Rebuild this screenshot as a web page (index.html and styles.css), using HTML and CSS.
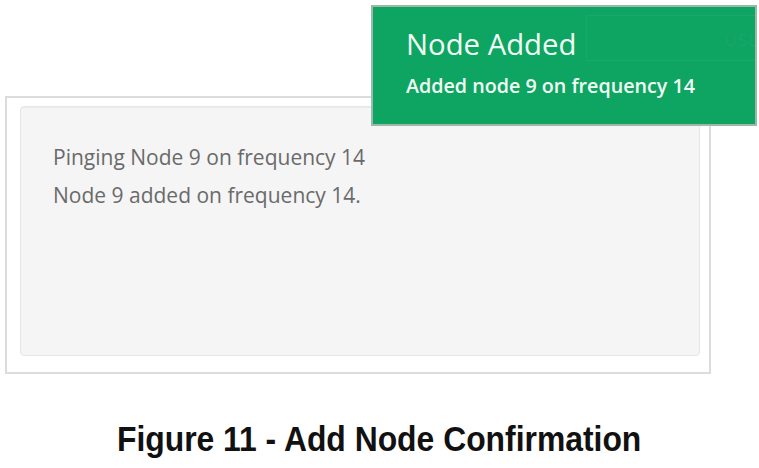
FILE: index.html
```html
<!DOCTYPE html>
<html>
<head>
<meta charset="utf-8">
<link rel="stylesheet" href="styles.css">
</head>
<body>
<div class="stage">
  <div class="panel">
    <div class="well">
      <p class="line">Pinging Node 9 on frequency 14</p>
      <p class="line">Node 9 added on frequency 14.</p>
    </div>
  </div>
  <div class="toast">
    <div class="ghost"><span class="ghost-text">USL</span></div>
    <div class="toast-title">Node Added</div>
    <div class="toast-msg">Added node 9 on frequency 14</div>
  </div>
  <div class="caption"><span class="caption-text">Figure 11 - Add Node Confirmation</span></div>
</div>
</body>
</html>
```
FILE: styles.css
```css
html, body {
  margin: 0;
  padding: 0;
  background: #ffffff;
}
.stage {
  position: relative;
  width: 759px;
  height: 468px;
  overflow: hidden;
  padding-top: 96px;
  box-sizing: border-box;
}
.panel {
  margin-left: 5px;
  width: 706px;
  height: 278px;
  box-sizing: border-box;
  border: 2px solid #dcdcdc;
  background: #ffffff;
  padding: 8px 9px 0 13px;
}
.well {
  height: 250px;
  box-sizing: border-box;
  background: #f5f5f5;
  border: 1px solid #e6e6e6;
  border-radius: 4px;
  box-shadow: inset 0 1px 1px rgba(0,0,0,0.04);
  padding: 36px 0 0 32px;
}
.line {
  margin: 0 0 10px 0;
  font-family: "Open Sans", sans-serif;
  font-size: 21px;
  line-height: 28px;
  color: #6a6a6a;
}
.toast {
  position: absolute;
  left: 371px;
  top: 5px;
  width: 386px;
  height: 121px;
  box-sizing: border-box;
  border: 2px solid #9bb8a8;
  background: #0ea462;
  padding: 20px 0 0 33px;
  font-family: "Open Sans", sans-serif;
  color: #f2fff5;
}
.ghost {
  position: absolute;
  left: 213px;
  top: 8px;
  width: 175px;
  height: 44px;
  border: 1px solid rgba(255,255,255,0.05);
  border-right: none;
}
.ghost-text {
  position: absolute;
  right: 4px;
  top: 12px;
  font-size: 17px;
  color: rgba(255,255,255,0.06);
  letter-spacing: 1px;
}
.toast-title {
  font-size: 29.3px;
  line-height: 34px;
  font-weight: 400;
}
.toast-msg {
  margin-top: 13px;
  font-size: 19.7px;
  line-height: 24px;
  font-weight: 600;
}
.caption {
  display: flex;
  justify-content: center;
  margin-top: 45px;
}
.caption-text {
  font-family: "Liberation Sans", Arial, sans-serif;
  font-weight: 700;
  font-size: 35px;
  line-height: 40px;
  color: #111111;
  transform: scaleX(0.91);
  white-space: nowrap;
}
```
